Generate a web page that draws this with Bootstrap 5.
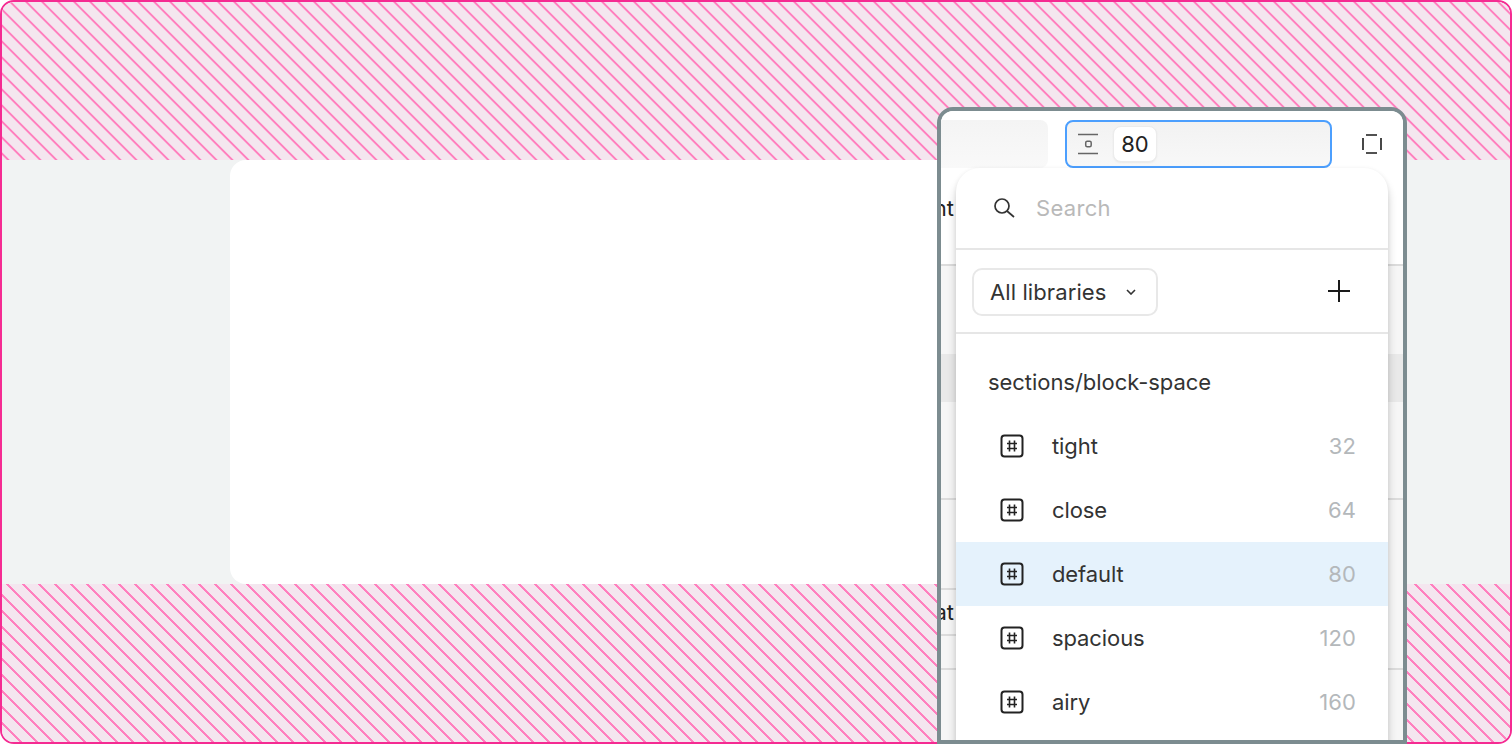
<!DOCTYPE html>
<html lang="en">
<head>
<meta charset="utf-8">
<title>Variable picker</title>
<link href="https://cdn.jsdelivr.net/npm/bootstrap@5.3.0/dist/css/bootstrap.min.css" rel="stylesheet">
<style>
html,body{height:744px;overflow:hidden;margin:0;background:#fff;font-family:"Inter","Liberation Sans",sans-serif}
.shell{position:relative;height:744px}
.stage{height:744px;border:2px solid #f52b92;border-radius:14px;overflow:hidden;background:#f1f3f3}
.hatch{flex:0 0 auto;height:158px;background-color:#f4e6ef}
.hatch-top{background-image:repeating-linear-gradient(45deg,#f4e6ef 0,#f4e6ef 3.3px,#ff7fbe 3.8px,#ff7fbe 5.3px,#f4e6ef 5.8px,#f4e6ef 11.3137px)}
.hatch-bottom{background-image:repeating-linear-gradient(45deg,#f4e6ef 0,#f4e6ef .8px,#ff7fbe 1.3px,#ff7fbe 2.8px,#f4e6ef 3.3px,#f4e6ef 11.3137px)}
.mid{flex:1 1 auto;padding-left:228px;padding-right:228px}
.sheet{background:#fff;border-radius:16px;height:100%}
.win{position:absolute;left:937px;top:107px;width:470px;height:637px;border:4px solid #7c8c90;border-radius:16px 16px 0 0;background:#fff;overflow:hidden}
.win-head{height:57px;background:#fff;padding:9px 0 0 0}
.field-a{flex:0 0 107px;height:48px;background:linear-gradient(#f4f4f4,#f9f9f9);border-radius:0 8px 8px 0}
.field-b{flex:0 0 267px;height:48px;margin-left:17px;background:linear-gradient(#f2f2f2,#f8f8f8);border:2px solid #4c9ffe;border-radius:8px;padding-left:11px}
.chip{width:44px;height:36px;margin-left:13px;background:#fff;border:1px solid #ececec;border-radius:8px;box-shadow:0 1px 2px rgba(0,0,0,.06);font-size:22px;color:#222;line-height:34px;text-align:center}
.focus-ic{margin-left:30px}
.lay{font-size:22px;color:#222;white-space:nowrap}
.lay-line{border-bottom:2px solid #dcdcdc}
.lay-a{height:98px;line-height:80px}
.lay-b{height:234px;padding-top:88px}
.lay-c{height:90px;width:50%}
.lay-d{height:46px;line-height:44px;width:50%}
.lay-e{height:34px}
.lay-side{display:block;margin-left:-107px;width:120px;text-align:right}
.glow{height:48px;background:#e9e9e9}
.under{background:#f6f6f6;height:500px}
.drop{position:absolute;left:15px;top:57px;width:432px;height:600px;background:#fff;border-radius:24px 24px 0 0;box-shadow:0 8px 10px rgba(0,0,0,.2),0 0 4px rgba(0,0,0,.05);overflow:hidden;font-size:22px;color:#333}
.drop-search{height:82px;padding-left:36px;border-bottom:2px solid #e6e6e6;gap:20px}
.drop-search span{color:#b9b9b9;letter-spacing:.3px}
.drop-filter{height:84px;padding:2px 38px 0 16px;border-bottom:2px solid #e6e6e6}
.plus-ic{margin-top:-2px}
.lib-btn{height:48px;width:186px;padding:0 0 0 16px;border:2px solid #e8e8e8;border-radius:10px;font-size:22px;color:#333;background:#fff;gap:20px;letter-spacing:.1px}
.lib-btn:hover{color:#333;background:#fff;border-color:#e8e8e8}
.drop-title{height:80px;padding:18px 0 0 32px;line-height:60px;letter-spacing:-.05px}
.var-list{--bs-list-group-bg:transparent;--bs-list-group-border-width:0;--bs-list-group-color:#333;--bs-list-group-item-padding-x:0;--bs-list-group-item-padding-y:0;border-radius:0}
.var-row{height:64px;padding:0 32px 0 44px!important;font-size:22px;gap:28px;letter-spacing:-.1px}
.var-row.is-on{background:#e5f2fc}
.var-val{color:#b4b8bb;letter-spacing:.1px}
</style>
</head>
<body>
<div class="shell">
  <div class="stage d-flex flex-column">
    <div class="hatch hatch-top"></div>
    <div class="mid"><div class="sheet"></div></div>
    <div class="hatch hatch-bottom"></div>
  </div>

  <div class="win">
    <div class="win-head d-flex">
      <div class="field-a"></div>
      <div class="field-b d-flex align-items-center">
        <svg width="22" height="22" viewBox="0 0 22 22" fill="none" stroke="#666" stroke-width="1.7" aria-hidden="true"><path d="M0 1.5h20M0 20.5h20"/><rect x="7.7" y="8.2" width="5.5" height="5.5" rx="1.5" stroke-width="1.5"/></svg>
        <div class="chip">80</div>
      </div>
      <svg class="focus-ic align-self-center" width="20" height="20" viewBox="0 0 20 20" fill="none" stroke="#1a1a1a" stroke-width="1.6" aria-hidden="true"><path d="M4 1h11M4 19h11M1 4v12M19 4v12"/></svg>
    </div>
    <div class="lay lay-a lay-line"><span class="lay-side">nt</span></div>
    <div class="under">
      <div class="lay lay-b lay-line"><div class="glow"></div></div>
      <div class="lay lay-c lay-line"></div>
      <div class="lay lay-d lay-line"><span class="lay-side">at</span></div>
      <div class="lay lay-e lay-line"></div>
    </div>

    <div class="drop">
      <div class="drop-search d-flex align-items-center">
        <svg width="24" height="24" viewBox="0 0 24 24" fill="none" stroke="#333" stroke-width="1.7" aria-hidden="true"><circle cx="10" cy="10" r="7"/><path d="M15 15l7 6"/></svg>
        <span>Search</span>
      </div>
      <div class="drop-filter d-flex align-items-center justify-content-between">
        <button type="button" class="btn lib-btn d-flex align-items-center">All libraries
          <svg width="10" height="6" viewBox="0 0 10 6" fill="none" stroke="#333" stroke-width="1.6" aria-hidden="true"><path d="M1 1l4 4 4-4"/></svg>
        </button>
        <svg class="plus-ic" width="22" height="22" viewBox="0 0 22 22" fill="none" stroke="#1a1a1a" stroke-width="2" aria-hidden="true"><path d="M11 0v22M0 11h22"/></svg>
      </div>
      <div class="drop-title">sections/block-space</div>
      <div class="list-group var-list">
        <div class="list-group-item var-row d-flex align-items-center">
          <svg width="24" height="24" viewBox="0 0 24 24" fill="none" stroke="#222" stroke-width="2" aria-hidden="true"><rect x="1.5" y="1.5" width="21" height="21" rx="3"/><path d="M9.5 6.5v11M14.5 6.5v11M7 9.5h10M7 14.5h10" stroke-width="1.6"/></svg>
          <span class="flex-grow-1">tight</span><span class="var-val">32</span>
        </div>
        <div class="list-group-item var-row d-flex align-items-center">
          <svg width="24" height="24" viewBox="0 0 24 24" fill="none" stroke="#222" stroke-width="2" aria-hidden="true"><rect x="1.5" y="1.5" width="21" height="21" rx="3"/><path d="M9.5 6.5v11M14.5 6.5v11M7 9.5h10M7 14.5h10" stroke-width="1.6"/></svg>
          <span class="flex-grow-1">close</span><span class="var-val">64</span>
        </div>
        <div class="list-group-item var-row is-on d-flex align-items-center">
          <svg width="24" height="24" viewBox="0 0 24 24" fill="none" stroke="#222" stroke-width="2" aria-hidden="true"><rect x="1.5" y="1.5" width="21" height="21" rx="3"/><path d="M9.5 6.5v11M14.5 6.5v11M7 9.5h10M7 14.5h10" stroke-width="1.6"/></svg>
          <span class="flex-grow-1">default</span><span class="var-val">80</span>
        </div>
        <div class="list-group-item var-row d-flex align-items-center">
          <svg width="24" height="24" viewBox="0 0 24 24" fill="none" stroke="#222" stroke-width="2" aria-hidden="true"><rect x="1.5" y="1.5" width="21" height="21" rx="3"/><path d="M9.5 6.5v11M14.5 6.5v11M7 9.5h10M7 14.5h10" stroke-width="1.6"/></svg>
          <span class="flex-grow-1">spacious</span><span class="var-val">120</span>
        </div>
        <div class="list-group-item var-row d-flex align-items-center">
          <svg width="24" height="24" viewBox="0 0 24 24" fill="none" stroke="#222" stroke-width="2" aria-hidden="true"><rect x="1.5" y="1.5" width="21" height="21" rx="3"/><path d="M9.5 6.5v11M14.5 6.5v11M7 9.5h10M7 14.5h10" stroke-width="1.6"/></svg>
          <span class="flex-grow-1">airy</span><span class="var-val">160</span>
        </div>
      </div>
    </div>
  </div>
</div>
<script src="https://cdn.jsdelivr.net/npm/bootstrap@5.3.0/dist/js/bootstrap.bundle.min.js"></script>
</body>
</html>
